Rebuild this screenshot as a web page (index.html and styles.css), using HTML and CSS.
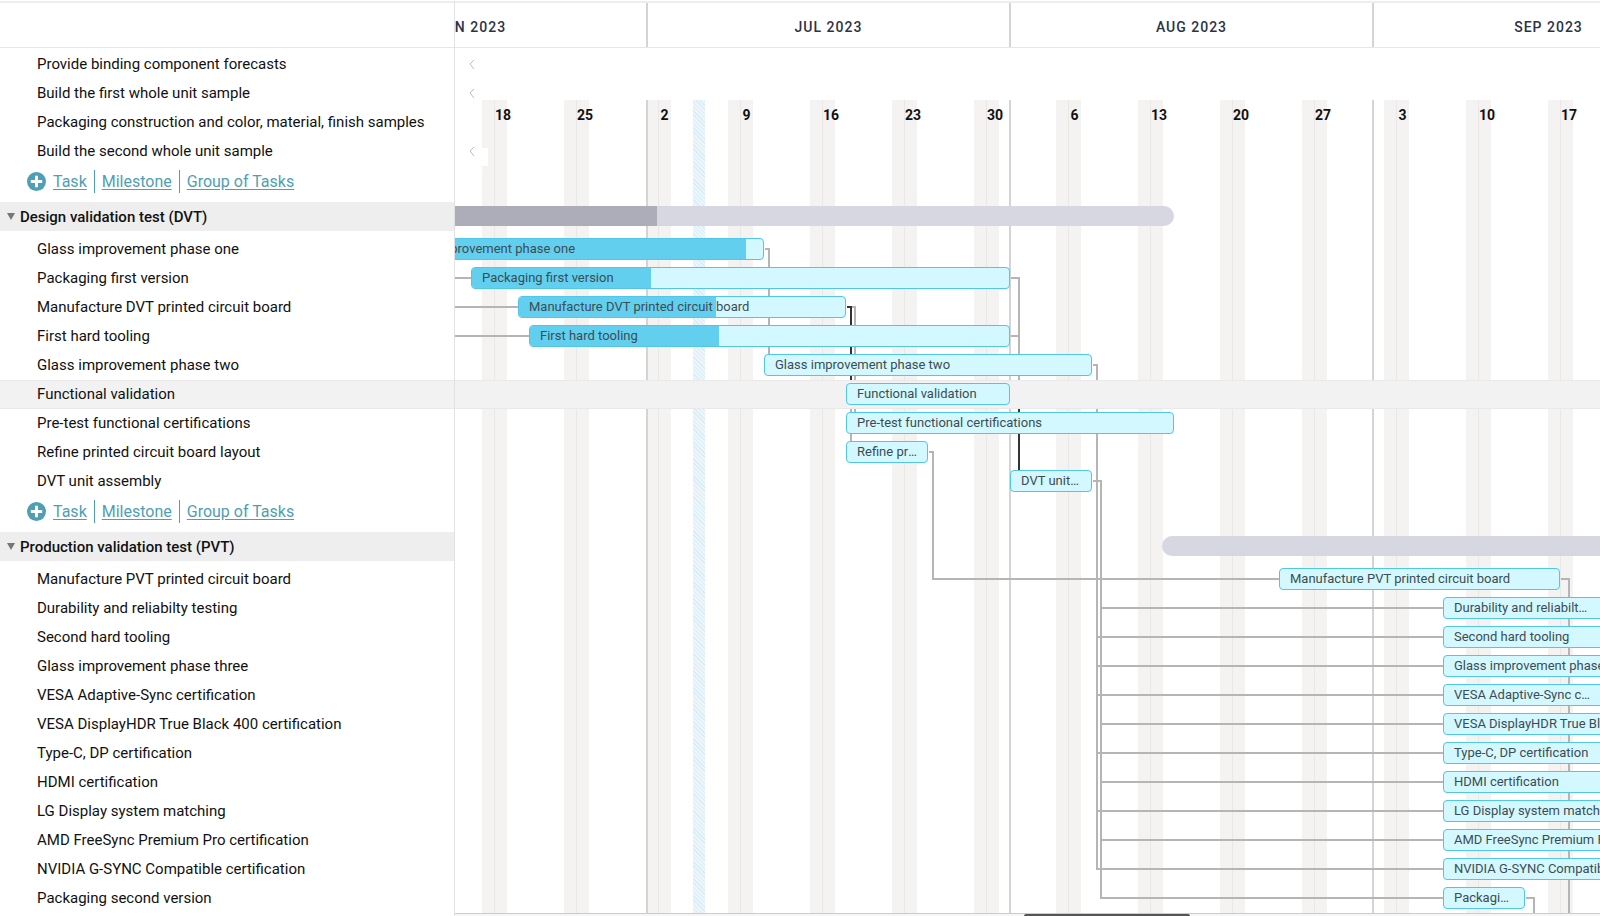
FILE: index.html
```html
<!DOCTYPE html>
<html lang="en">
<head>
    <meta charset="utf-8">
    <meta name="viewport" content="width=device-width, initial-scale=1">
    <title>Project Gantt</title>
    <link rel="stylesheet" href="styles.css">
</head>
<body>
    <div class="gantt">
        <div class="sidebar">
            <div class="sidebarHeader"></div>
            <div class="taskList">
                <div class="taskRow">Provide binding component forecasts</div>
                <div class="taskRow">Build the first whole unit sample</div>
                <div class="taskRow">Packaging construction and color, material, finish samples</div>
                <div class="taskRow">Build the second whole unit sample</div>
                <div class="addRow">
                    <svg class="addIcon" viewBox="0 0 20 20"><circle cx="10" cy="10" r="10"/><path d="M10 4V16M4 10H16"/></svg>
                    <a href="#">Task</a>
                    <a href="#">Milestone</a>
                    <a href="#">Group of Tasks</a>
                </div>
                <div class="groupRow">
                    <button class="toggle" aria-label="Collapse group"></button>
                    <span>Design validation test (DVT)</span>
                </div>
                <div class="taskRow">Glass improvement phase one</div>
                <div class="taskRow">Packaging first version</div>
                <div class="taskRow">Manufacture DVT printed circuit board</div>
                <div class="taskRow">First hard tooling</div>
                <div class="taskRow">Glass improvement phase two</div>
                <div class="taskRow active">Functional validation</div>
                <div class="taskRow">Pre-test functional certifications</div>
                <div class="taskRow">Refine printed circuit board layout</div>
                <div class="taskRow">DVT unit assembly</div>
                <div class="addRow">
                    <svg class="addIcon" viewBox="0 0 20 20"><circle cx="10" cy="10" r="10"/><path d="M10 4V16M4 10H16"/></svg>
                    <a href="#">Task</a>
                    <a href="#">Milestone</a>
                    <a href="#">Group of Tasks</a>
                </div>
                <div class="groupRow">
                    <button class="toggle" aria-label="Collapse group"></button>
                    <span>Production validation test (PVT)</span>
                </div>
                <div class="taskRow">Manufacture PVT printed circuit board</div>
                <div class="taskRow">Durability and reliabilty testing</div>
                <div class="taskRow">Second hard tooling</div>
                <div class="taskRow">Glass improvement phase three</div>
                <div class="taskRow">VESA Adaptive-Sync certification</div>
                <div class="taskRow">VESA DisplayHDR True Black 400 certification</div>
                <div class="taskRow">Type-C, DP certification</div>
                <div class="taskRow">HDMI certification</div>
                <div class="taskRow">LG Display system matching</div>
                <div class="taskRow">AMD FreeSync Premium Pro certification</div>
                <div class="taskRow">NVIDIA G-SYNC Compatible certification</div>
                <div class="taskRow">Packaging second version</div>
            </div>
        </div>

        <div class="chart">
            <div class="months" id="months"></div>
            <div class="chartBody">
                <div class="calendar" id="calendar"></div>
                <svg class="links">
                    <path d="M0 230H16M0 259H63M0 288H74"/>
                    <path d="M310 201H314V317"/>
                    <path d="M556 230H564V346M556 288H564"/>
                    <path d="M392 259H400V375M396 346V404"/>
                    <path d="M638 317H642V821H988M642 589H988M642 618H988M642 647H988M642 705H988M642 763H988"/>
                    <path d="M474 404H478V531H824"/>
                    <path d="M638 433H646V850H988M646 560H988M646 676H988M646 734H988M646 792H988"/>
                    <path d="M1106 531H1114V880M1071 850H1079V880"/>
                    <path class="critical" d="M392 259H396V346M564 346V433"/>
                </svg>
                <div class="bars" id="bars"></div>
            </div>
            <div class="scrollbar"><div class="scrollThumb"></div></div>
        </div>
    </div>

    <script type="text/javascript">
        // days are counted from July 1st
        const weekWidth = 82;
        const july = 191;

        function dayX(day) {
            return july + Math.floor(day * weekWidth / 7);
        }

        function addDiv(parent, className, text) {
            let div = document.createElement("div");
            div.className = className;
            if (text) {
                div.textContent = text;
            }
            parent.appendChild(div);
            return div;
        }

        function place(div, from, to) {
            div.style.left = from + "px";
            div.style.width = (to - from) + "px";
        }

        const months = [
            ["JUN 2023", -30, 0],
            ["JUL 2023", 0, 31],
            ["AUG 2023", 31, 62],
            ["SEP 2023", 62, 92]
        ];

        const sundays = ["18", "25", "2", "9", "16", "23", "30", "6", "13", "20", "27", "3", "10", "17"];

        // type, name, first day, last day, days done
        const rows = [
            ["earlier"],
            ["earlier"],
            ["empty"],
            ["earlier patched"],
            ["add"],
            ["group", "", -40, 45, 40.9],
            ["task", "Glass improvement phase one", -22, 10, 30.4],
            ["task", "Packaging first version", -15, 31, 15.3],
            ["task", "Manufacture DVT printed circuit board", -11, 17, 16.8],
            ["task", "First hard tooling", -10, 31, 16.1],
            ["task", "Glass improvement phase two", 10, 38, 0],
            ["task active", "Functional validation", 17, 31, 0],
            ["task", "Pre-test functional certifications", 17, 45, 0],
            ["task", "Refine printed circuit board layout", 17, 24, 0],
            ["task", "DVT unit assembly", 31, 38, 0],
            ["add"],
            ["group", "", 44, 130, 0],
            ["task", "Manufacture PVT printed circuit board", 54, 78, 0],
            ["task", "Durability and reliabilty testing", 68, 81.7, 0],
            ["task", "Second hard tooling", 68, 96, 0],
            ["task", "Glass improvement phase three", 68, 96, 0],
            ["task", "VESA Adaptive-Sync certification", 68, 82, 0],
            ["task", "VESA DisplayHDR True Black 400 certification", 68, 103, 0],
            ["task", "Type-C, DP certification", 68, 96, 0],
            ["task", "HDMI certification", 68, 96, 0],
            ["task", "LG Display system matching", 68, 96, 0],
            ["task", "AMD FreeSync Premium Pro certification", 68, 103, 0],
            ["task", "NVIDIA G-SYNC Compatible certification", 68, 103, 0],
            ["task", "Packaging second version", 68, 75, 0]
        ];

        let monthsBox = document.getElementById("months");
        let calendar = document.getElementById("calendar");
        let bars = document.getElementById("bars");

        for (let [name, from, to] of months) {
            place(addDiv(monthsBox, "month", name), dayX(from), dayX(to));
        }

        sundays.forEach(function(label, i) {
            let saturday = -14 + i * 7;
            let weekend = addDiv(calendar, "weekend");
            place(weekend, dayX(saturday), dayX(saturday + 2) + 2);
            addDiv(weekend, "saturday");
            addDiv(weekend, "sunday", label);
        });

        for (let [name, from] of months) {
            place(addDiv(calendar, "monthLine"), dayX(from), dayX(from) + 2);
        }
        place(addDiv(calendar, "today"), dayX(4) + 1, dayX(5) + 1);

        for (let [type, name, from, to, done] of rows) {
            let row = addDiv(bars, "chartRow " + type);
            if (type.startsWith("earlier")) {
                row.innerHTML = '<svg class="chevron" viewBox="0 0 5 9"><path d="M5 0L1 4L5 9"/></svg>';
            } else if (type.startsWith("task") || type === "group") {
                let bar = addDiv(row, "bar");
                place(bar, dayX(from) + 1, dayX(to) + 1);
                if (done) {
                    addDiv(bar, "done").style.width = Math.round(done * weekWidth / 7) + "px";
                }
                addDiv(bar, "barName", name);
            }
        }
    </script>
</body>
</html>
```
FILE: styles.css
```css
* {
    box-sizing: border-box;
}

body {
    margin: 0;
    background-color: #fff;
    color: #111;
    font-family: Roboto, sans-serif;
    font-size: 15px;
}

.gantt {
    display: flex;
    height: 100vh;
    padding-top: 1px;
    overflow: hidden;
}

/* left column */
.sidebar {
    flex: 0 0 455px;
    border-right: 1px solid #e2e2e2;
}

.sidebarHeader,
.months {
    height: 47px;
    border-top: 2px solid #eee;
    border-bottom: 1px solid #e6e6e6;
}

.taskList {
    padding-top: 2px;
}

.taskRow {
    height: 29px;
    padding-left: 37px;
    line-height: 29px;
    white-space: nowrap;
}

.active {
    background-color: #f2f2f2;
    box-shadow: inset 0 1px #e9e9e9, inset 0 -1px #e9e9e9;
}

.addRow {
    display: flex;
    align-items: center;
    height: 30px;
    padding-left: 27px;
    font-size: 16px;
    line-height: 23px;
}

.addRow a {
    padding: 0 7px;
    color: #4e9fb3;
    text-underline-offset: 2px;
}

.addRow a + a {
    border-left: 1px solid #4e9fb3;
}

.addIcon {
    width: 19px;
    height: 19px;
    fill: #4e9fb3;
    stroke: #fff;
    stroke-width: 3;
}

.addIcon circle {
    stroke: none;
}

.groupRow {
    display: flex;
    align-items: center;
    height: 29px;
    margin: 6px 0 4px;
    padding-left: 7px;
    gap: 5px;
    background-color: #eee;
    font-weight: 500;
}

.toggle {
    width: 8px;
    height: 7px;
    padding: 0;
    border: none;
    background-color: #777;
    clip-path: polygon(0 0, 100% 0, 50% 100%);
    cursor: pointer;
}

/* timeline */
.chart {
    display: flex;
    flex: 1;
    flex-direction: column;
    min-width: 0;
}

.months {
    position: relative;
    flex: none;
    overflow: hidden;
}

.month {
    position: absolute;
    height: 44px;
    border-left: 2px solid #d4d4d4;
    color: #2c3345;
    font-size: 14px;
    font-weight: 500;
    letter-spacing: 1px;
    line-height: 48px;
    text-align: center;
}

.chartBody {
    position: relative;
    flex: 1;
    min-height: 0;
    overflow: hidden;
}

.calendar {
    position: absolute;
    top: 52px;
    bottom: 0;
    left: 0;
    right: 0;
}

.weekend {
    display: flex;
    position: absolute;
    height: 100%;
    background-color: #f4f3f2;
}

.saturday {
    flex: 0 0 13px;
    border-right: 1px solid #e8e8e8;
}

.sunday {
    width: 11px;
    color: #111;
    font-size: 14px;
    font-weight: 700;
    line-height: 30px;
    text-align: center;
}

.monthLine {
    position: absolute;
    height: 100%;
    background-color: #d4d4d4;
}

.today {
    position: absolute;
    height: 100%;
    background: repeating-linear-gradient(45deg, #d9edf6 0 1px, #ecf6fa 1px 3px);
}

.links {
    position: absolute;
    width: 100%;
    height: 100%;
    fill: none;
    stroke: #b5b5b5;
    stroke-width: 2;
}

.links .critical {
    stroke: #333;
}

.bars {
    position: relative;
    padding-top: 2px;
}

.chartRow {
    position: relative;
    height: 29px;
}

.chartRow.add {
    height: 30px;
}

.chartRow.group {
    margin: 6px 0 4px;
}

.chevron {
    display: block;
    width: 5px;
    height: 29px;
    margin-left: 14px;
    fill: none;
    stroke: #bbb;
    overflow: visible;
}

.patched::after {
    content: "";
    position: absolute;
    top: 11px;
    left: 27px;
    width: 6px;
    height: 18px;
    background-color: #fff;
}

.bar {
    position: absolute;
    top: 3px;
    height: 22px;
    border: 1px solid #50c7e8;
    border-radius: 4px;
    background-color: #d4f8ff;
    overflow: hidden;
}

.done {
    position: absolute;
    height: 100%;
    background-color: #62cfee;
}

.barName {
    position: relative;
    padding: 0 10px;
    color: #3b4d54;
    font-size: 13px;
    line-height: 20px;
    white-space: nowrap;
    overflow: hidden;
    text-overflow: ellipsis;
}

.group .bar {
    top: 4px;
    height: 20px;
    border: none;
    border-radius: 10px;
    background-color: #d6d7e0;
}

.group .done {
    background-color: #adadba;
}

.scrollbar {
    flex: 0 0 3px;
    border-top: 1px solid #ccc;
    background-color: #f6f6f6;
}

.scrollThumb {
    width: 166px;
    height: 2px;
    margin-left: 569px;
    border-radius: 2px 2px 0 0;
    background-color: #555;
}
```
